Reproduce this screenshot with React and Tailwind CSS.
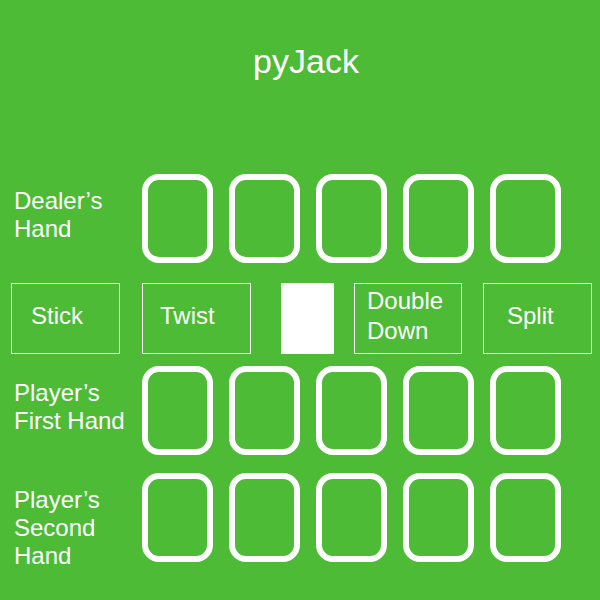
const CARDS = [0, 1, 2, 3, 4];

function Card() {
  return <div className="h-[89px] w-[71px] rounded-[17px] border-[6px] border-white" />;
}

function HandRow({ lines, className }) {
  return (
    <div className={`flex items-start ${className}`}>
      <div className="w-[142px] pl-[14px] pt-[13px] text-[24px] leading-[28px] text-white">
        {lines.map((line) => (
          <div key={line}>{line}</div>
        ))}
      </div>
      <div className="flex gap-[16px]">
        {CARDS.map((i) => (
          <Card key={i} />
        ))}
      </div>
    </div>
  );
}

function ActionButton({ children, className }) {
  return (
    <div
      className={`flex h-[71px] items-center border border-white text-[24px] leading-[30px] text-white ${className}`}
    >
      <div className="-mt-[6px]">{children}</div>
    </div>
  );
}

export default function App() {
  return (
    <div
      className="h-[600px] w-[600px] overflow-hidden bg-[#4dbb36]"
      style={{ fontFamily: '"Liberation Sans", Arial, sans-serif' }}
    >
      <h1 className="pl-[12px] pt-[41px] text-center text-[34px] leading-[40px] text-white">
        pyJack
      </h1>

      <HandRow lines={['Dealer’s', 'Hand']} className="mt-[93px]" />

      {/* Action buttons */}
      <div className="mt-[20px] flex items-center">
        <ActionButton className="ml-[11px] w-[109px] pl-[19px]">Stick</ActionButton>
        <ActionButton className="ml-[22px] w-[109px] pl-[17px]">Twist</ActionButton>
        <div className="ml-[30px] h-[71px] w-[53px] bg-white" />
        <ActionButton className="ml-[20px] w-[108px] pl-[12px]">
          Double
          <br />
          Down
        </ActionButton>
        <ActionButton className="ml-[21px] w-[109px] pl-[23px]">Split</ActionButton>
      </div>

      <HandRow lines={['Player’s', 'First Hand']} className="mt-[12px]" />
      <HandRow lines={['Player’s', 'Second', 'Hand']} className="mt-[18px]" />
    </div>
  );
}
